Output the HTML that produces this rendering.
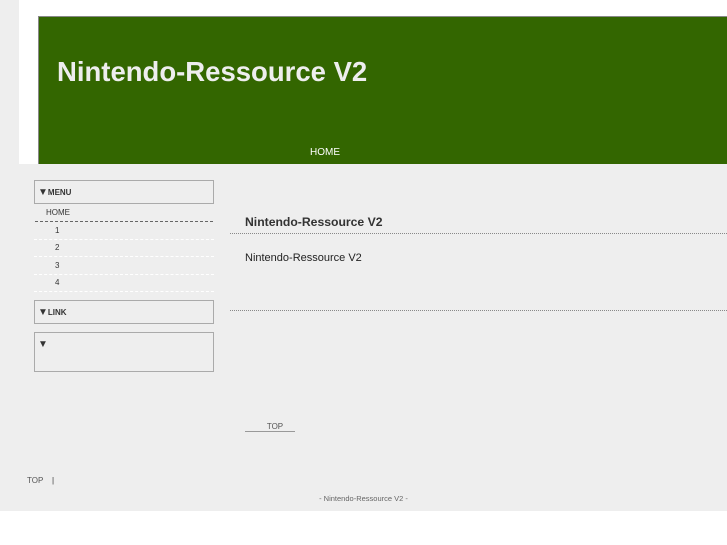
<!DOCTYPE html>
<html><head><style>
*{margin:0;padding:0}
body{width:727px;height:545px;background:#fff;position:relative;font-family:"Liberation Sans",sans-serif;overflow:hidden}
.gray{position:absolute;left:0;top:0;width:727px;height:511px;background:#eee}
.white{position:absolute;left:19px;top:0;width:708px;height:164px;background:#fff}
.green{position:absolute;left:38px;top:16px;width:689px;height:148px;background:#336600;border-top:1px solid #888;border-left:1px solid #888;box-sizing:border-box}
.title{position:absolute;left:57px;top:56px;color:#eee;font-size:27.5px;font-weight:bold}
.home{position:absolute;left:310px;top:147px;color:#fff;font-size:10px}
.box{position:absolute;left:34px;width:180px;border:1px solid #aaa;box-sizing:border-box;font-size:8px;font-weight:bold;color:#333}
.tri{font-size:10px}
.t{position:absolute;font-size:8px;color:#333}
.dl{position:absolute;left:34px;width:180px;border-top:1px dashed #fff}
</style></head><body>
<div class="gray"></div><div class="white"></div><div class="green"></div>
<div class="title">Nintendo-Ressource V2</div>
<div class="home">HOME</div>
<div class="box" style="top:180px;height:24px;padding:6px 0 0 3px"><span class="tri">▼</span>MENU</div>
<div class="t" style="left:46px;top:208px">HOME</div>
<div style="position:absolute;left:35px;top:221px;width:178px;border-top:1px dashed #666"></div>
<div class="t" style="left:55px;top:226px">1</div><div class="dl" style="top:239px"></div>
<div class="t" style="left:55px;top:243px">2</div><div class="dl" style="top:256px"></div>
<div class="t" style="left:55px;top:261px">3</div><div class="dl" style="top:274px"></div>
<div class="t" style="left:55px;top:278px">4</div><div class="dl" style="top:291px"></div>
<div class="box" style="top:300px;height:24px;padding:6px 0 0 3px"><span class="tri">▼</span>LINK</div>
<div class="box" style="top:332px;height:40px;padding:6px 0 0 3px"><span class="tri">▼</span></div>
<div style="position:absolute;left:245px;top:215px;font-size:12.2px;font-weight:bold;color:#333">Nintendo-Ressource V2</div>
<div style="position:absolute;left:230px;top:233px;width:497px;border-top:1px dotted #888"></div>
<div style="position:absolute;left:245px;top:252px;font-size:11px;color:#222">Nintendo-Ressource V2</div>
<div style="position:absolute;left:230px;top:310px;width:497px;border-top:1px dotted #888"></div>
<div style="position:absolute;left:245px;top:422px;width:50px;border-bottom:1px solid #999;text-align:center;font-size:8px;color:#555;padding-left:10px;box-sizing:border-box">TOP</div>
<div style="position:absolute;left:27px;top:476px;font-size:8px;color:#555">TOP &nbsp;&nbsp; <span style="color:#333">|</span></div>
<div style="position:absolute;left:0;width:727px;top:494px;text-align:center;font-size:7.5px;color:#666">- Nintendo-Ressource V2 -</div>
</body></html>
